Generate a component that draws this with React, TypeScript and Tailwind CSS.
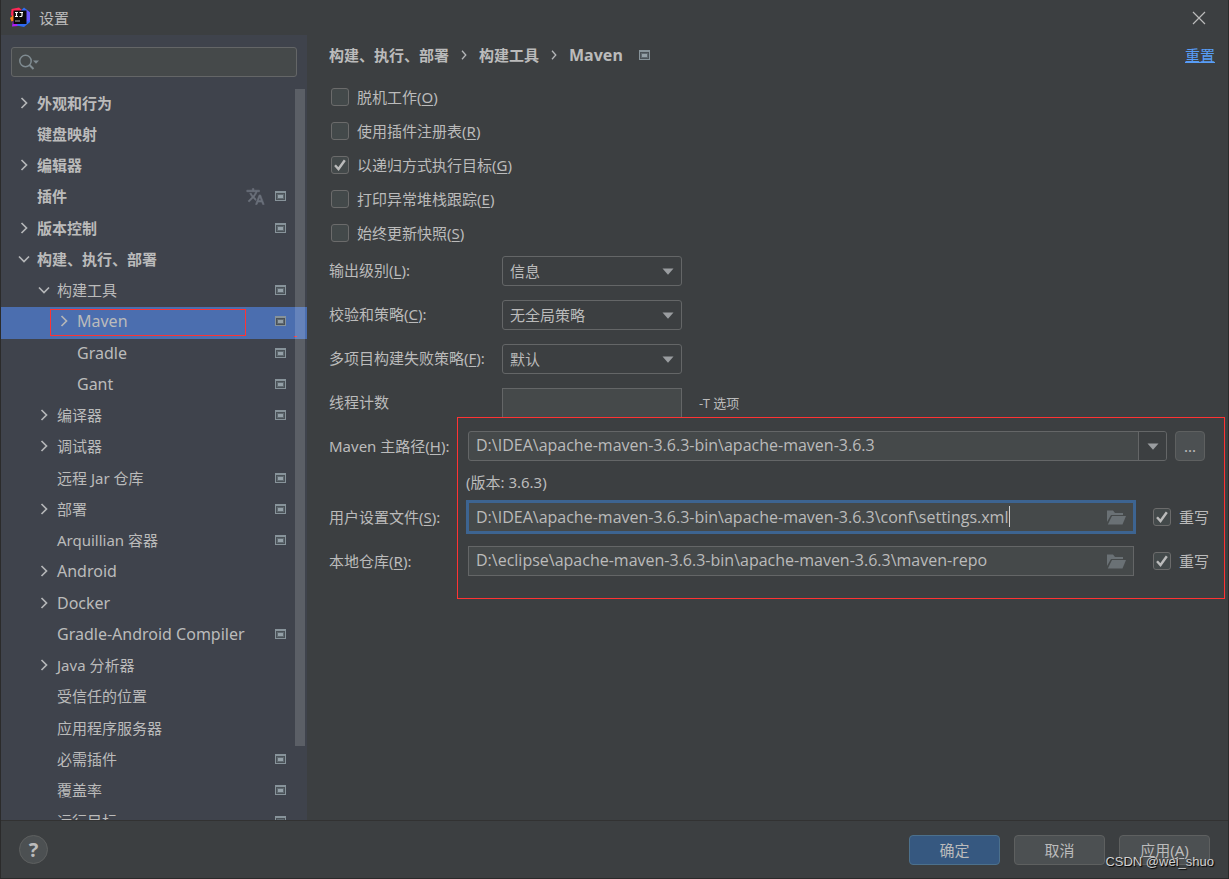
import { useState } from 'react';
import type { ReactNode } from 'react';

type Node = {
    label: string;
    level: 0 | 1 | 2;
    arrow?: 'right' | 'down';
    scoped?: boolean;
    translate?: boolean;
};

const tree: Node[] = [
    { label: '外观和行为', level: 0, arrow: 'right' },
    { label: '键盘映射', level: 0 },
    { label: '编辑器', level: 0, arrow: 'right' },
    { label: '插件', level: 0, scoped: true, translate: true },
    { label: '版本控制', level: 0, arrow: 'right', scoped: true },
    { label: '构建、执行、部署', level: 0, arrow: 'down' },
    { label: '构建工具', level: 1, arrow: 'down', scoped: true },
    { label: 'Maven', level: 2, arrow: 'right', scoped: true },
    { label: 'Gradle', level: 2, scoped: true },
    { label: 'Gant', level: 2, scoped: true },
    { label: '编译器', level: 1, arrow: 'right', scoped: true },
    { label: '调试器', level: 1, arrow: 'right' },
    { label: '远程 Jar 仓库', level: 1, scoped: true },
    { label: '部署', level: 1, arrow: 'right', scoped: true },
    { label: 'Arquillian 容器', level: 1, scoped: true },
    { label: 'Android', level: 1, arrow: 'right' },
    { label: 'Docker', level: 1, arrow: 'right' },
    { label: 'Gradle-Android Compiler', level: 1, scoped: true },
    { label: 'Java 分析器', level: 1, arrow: 'right' },
    { label: '受信任的位置', level: 1 },
    { label: '应用程序服务器', level: 1 },
    { label: '必需插件', level: 1, scoped: true },
    { label: '覆盖率', level: 1, scoped: true },
    { label: '运行目标', level: 1, scoped: true },
];

const indent = ['pl-4 font-bold', 'pl-9', 'pl-14'];

// latin-only names are set one step larger so they sit evenly next to the Chinese ones
const isLatin = (s: string) => /^[\x20-\x7e]+$/.test(s);

const Logo = () => (
    <svg width="21" height="21" viewBox="0 0 21 21" aria-hidden="true">
        <path d="M1.500 2 9 .5 13 4 5 12.500 1 8z" fill="#fe2857" />
        <path d="M0 11 3.500 8 6 13 1.500 14.500z" fill="#fc801d" />
        <path d="M2 19.500 3 14 12 17 8 19z" fill="#af1df5" />
        <path d="M11 3.500 14 .5 20 5.500V15l-6 5-7-1.500z" fill="#2f6bf2" />
        <path d="M16 2.500l4 3V13l-4 2z" fill="#6b57ff" />
        <rect x="3.500" y="3.500" width="13" height="13.500" fill="#0a0a0a" />
        <path d="M5 5.500h3M6.500 5.500v4M5 9.500h3M9.500 5.500h3.500M12 5.500v3q0 1-1 1H9.500" stroke="#fff" strokeWidth="1.200" fill="none" />
        <path d="M5 14h5" stroke="#aaa" strokeWidth="1" />
    </svg>
);

const Chevron = ({ dir }: { dir: 'right' | 'down' }) => (
    <svg width="14" height="14" viewBox="0 0 14 14" fill="none" stroke="#b4b6b8" strokeWidth="1.700" aria-hidden="true">
        <path d={dir === 'right' ? 'M4.500 2 9.500 7 4.500 12' : 'M2 4.500 7 9.500 12 4.500'} />
    </svg>
);

const Crumb = () => (
    <svg width="6" height="10" viewBox="0 0 6 10" fill="none" stroke="#b4b6b8" strokeWidth="1.300" className="mx-3 shrink-0" aria-hidden="true">
        <path d="M1 .8 4.800 5 1 9.200" />
    </svg>
);

const TranslateIcon = () => (
    <svg width="19" height="19" viewBox="0 0 24 24" fill="#6b717b" stroke="#6b717b" strokeWidth=".7" className="mr-2.5 shrink-0" aria-hidden="true">
        <path d="M12.870 15.070l-2.540-2.510.03-.03A17.500 17.500 0 0 0 14.070 6H17V4h-7V2H8v2H1v2h11.170A15.700 15.700 0 0 1 9 11.350 15.600 15.600 0 0 1 6.690 8h-2a17.600 17.600 0 0 0 2.980 4.560l-5.090 5.020L4 19l5-5 3.110 3.110z" />
        <path d="M18.500 10h-2L12 22h2l1.120-3h4.750L21 22h2zm-2.620 7 1.620-4.330L19.120 17z" />
    </svg>
);

const ScopeIcon = () => (
    <svg width="11" height="10" viewBox="0 0 11 10" aria-hidden="true">
        <rect width="11" height="10" fill="#87939a" />
        <rect x="1" y="2" width="9" height="7" fill="#4a5157" />
        <rect x="2" y="3" width="7" height="5" fill="#5f6970" />
        <rect x="3" y="4" width="5" height="3" fill="#94a0a7" />
    </svg>
);

const Triangle = () => (
    <svg width="12" height="7" viewBox="0 0 12 7" aria-hidden="true">
        <path d="M.5.5h11L6 6.800z" fill="#9a9da0" />
    </svg>
);

const Folder = () => (
    <svg width="19" height="15" viewBox="0 0 19 15" fill="#6a7175" aria-hidden="true">
        <path d="M0 .5h6l2 2.500h8V5H4L0 12z" />
        <path d="M5 6h14l-3.500 8.500H.8z" />
    </svg>
);

const Key = ({ k, colon }: { k: string; colon?: boolean }) => (
    <>(<span className="underline underline-offset-2">{k}</span>){colon && ':'}</>
);

const CheckBox = ({ on, children }: { on?: boolean; children: ReactNode }) => {
    const [checked, setChecked] = useState(!!on);
    return (
        <label className="flex items-center gap-2 whitespace-nowrap">
            <span className="relative flex size-[18px] shrink-0">
                <input
                    type="checkbox"
                    checked={checked}
                    onChange={() => setChecked(!checked)}
                    className="size-full appearance-none rounded-[3px] border border-[#6b6b6b] bg-[#43494a]"
                />
                {checked && (
                    <svg viewBox="0 0 18 18" className="pointer-events-none absolute inset-0" fill="none" stroke="#bbb" strokeWidth="2.400">
                        <path d="M4 9.200 7.500 13 13.800 4.200" />
                    </svg>
                )}
            </span>
            <span>{children}</span>
        </label>
    );
};

const SelectRow = ({ id, label, k, value }: { id: string; label: string; k: string; value: string }) => (
    <div className="flex h-[30px] items-center">
        <label htmlFor={id} className="w-[173px] shrink-0 pb-0.5">{label}<Key k={k} colon /></label>
        <div className="relative w-[180px]">
            <select id={id} className="h-[30px] w-full appearance-none rounded-[3px] border border-[#646667] bg-[#3c3f41] px-[7px] outline-none">
                <option>{value}</option>
            </select>
            <span className="pointer-events-none absolute inset-y-0 right-2 flex items-center"><Triangle /></span>
        </div>
    </div>
);

const Sidebar = () => (
    <aside className="flex w-[306px] shrink-0 flex-col bg-[#3f434c] pt-3">
        <div className="relative mx-[10px]">
            <input aria-label="搜索" className="h-[30px] w-full rounded-[3px] border border-[#646667] bg-[#45494a] pl-8 outline-none" />
            <svg width="22" height="16" viewBox="0 0 22 16" className="pointer-events-none absolute left-2 top-[7px]" fill="none" stroke="#7f8b91" strokeWidth="1.500" aria-hidden="true">
                <circle cx="6.500" cy="7" r="5.700" />
                <path d="m10.500 11 4 4" strokeWidth="2" />
                <path d="M14 6.500h6L17 9.800z" fill="#7f8b91" stroke="none" />
            </svg>
        </div>
        <nav className="relative mt-3 min-h-0 flex-1 overflow-hidden">
            <ul>
                {tree.map((n) => (
                    <li key={n.label} className="relative h-[31px] nth-[4n]:h-8">
                        <button className={`flex h-full w-full items-center pb-1 pr-[21px] text-left ${indent[n.level]} ${n.label === 'Maven' ? 'bg-[#4b6eaf]' : ''}`}>
                            <span className="w-5 shrink-0">{n.arrow && <Chevron dir={n.arrow} />}</span>
                            <span className={`flex-1 whitespace-nowrap ${isLatin(n.label) ? 'text-base' : ''}`}>{n.label}</span>
                            {n.translate && <TranslateIcon />}
                            {n.scoped && <ScopeIcon />}
                        </button>
                        {n.label === 'Maven' && (
                            <>
                                <div className="pointer-events-none absolute bottom-[3px] left-[49px] right-[61px] top-[2px] border border-[#ff3333]" />
                                <div className="absolute bottom-[2px] right-[10px] h-px w-[3px] bg-[#ff3333]" />
                            </>
                        )}
                    </li>
                ))}
            </ul>
            <div className="absolute bottom-[74px] right-[2px] top-0 w-[10px] bg-white/15" />
        </nav>
    </aside>
);

const PathRow = ({ id, label, k, value, focused }: { id: string; label: string; k: string; value: string; focused?: boolean }) => (
    <div className="flex h-[30px] items-center">
        <label htmlFor={id} className="w-[139px] shrink-0">{label}<Key k={k} colon /></label>
        <div className="relative mr-[19px] flex-1">
            <input
                id={id}
                defaultValue={value}
                className={`block h-[30px] w-full border bg-[#45494a] pl-[7px] pr-9 font-['Open_Sans',sans-serif] text-base outline-none ${focused ? 'border-[#3d6491] ring-2 ring-[#3d6491]' : 'border-[#646667] pb-0.5'}`}
            />
            {focused && <span className="absolute left-[541px] top-[4px] h-[21px] w-px bg-[#d0d0d0]" />}
            <button aria-label="浏览" className="absolute inset-y-0 right-2 flex items-center"><Folder /></button>
        </div>
        <CheckBox on>重写</CheckBox>
    </div>
);

const MavenPage = () => (
    <main className="min-w-0 flex-1 pl-[22px] pr-[19px]">
        <div className="-mr-[6px] flex h-10 items-center font-bold">
            <span>构建、执行、部署</span>
            <Crumb />
            <span>构建工具</span>
            <Crumb />
            <span className="mr-4 text-base/5">Maven</span>
            <ScopeIcon />
            <a href="#" className="ml-auto font-normal text-[#589df6] underline">重置</a>
        </div>

        <div className="ml-[2px] mt-[5px] *:h-[34px]">
            <CheckBox>脱机工作<Key k="O" /></CheckBox>
            <CheckBox>使用插件注册表<Key k="R" /></CheckBox>
            <CheckBox on>以递归方式执行目标<Key k="G" /></CheckBox>
            <CheckBox>打印异常堆栈跟踪<Key k="E" /></CheckBox>
            <CheckBox>始终更新快照<Key k="S" /></CheckBox>
        </div>

        <div className="mt-[6px] flex flex-col gap-[14px]">
            <SelectRow id="level" label="输出级别" k="L" value="信息" />
            <SelectRow id="checksum" label="校验和策略" k="C" value="无全局策略" />
            <SelectRow id="fail" label="多项目构建失败策略" k="F" value="默认" />
            <div className="flex h-[30px] items-center">
                <label htmlFor="threads" className="w-[173px] pb-0.5">线程计数</label>
                <input id="threads" className="h-[30px] w-[180px] border border-[#646667] bg-[#45494a] px-[7px] outline-none" />
                <span className="ml-[17px] text-[13px]">-T 选项</span>
            </div>
        </div>

        <div className="relative mt-[13px]">
            <div className="flex h-[30px] items-center pr-1">
                <label htmlFor="home" className="w-[139px] shrink-0 whitespace-nowrap">Maven 主路径<Key k="H" colon /></label>
                <div className="flex h-[30px] flex-1 overflow-hidden rounded-[3px] border border-[#646667] bg-[#45494a]">
                    <input id="home" defaultValue="D:\IDEA\apache-maven-3.6.3-bin\apache-maven-3.6.3" className="min-w-0 flex-1 px-[7px] pb-0.5 font-['Open_Sans',sans-serif] text-base outline-none" />
                    <button aria-label="展开" className="flex w-7 items-center justify-center border-l border-[#646667] bg-[#3c3f41]"><Triangle /></button>
                </div>
                <button className="ml-2 size-[30px] rounded-[4px] border border-[#5e6060] bg-[#4c5052]">...</button>
            </div>
            <div className="flex h-[41px] items-center pl-[137px]">(版本: 3.6.3)</div>
            <div className="flex flex-col gap-[14px]">
                <PathRow id="settings" label="用户设置文件" k="S" value="D:\IDEA\apache-maven-3.6.3-bin\apache-maven-3.6.3\conf\settings.xml" focused />
                <PathRow id="repo" label="本地仓库" k="R" value="D:\eclipse\apache-maven-3.6.3-bin\apache-maven-3.6.3\maven-repo" />
            </div>
            <div className="pointer-events-none absolute -bottom-[23px] -right-4 -top-[14px] left-[128px] border border-[#ff3333]" />
        </div>
    </main>
);

const Footer = () => (
    <footer className="relative flex h-[58px] shrink-0 items-center gap-[14px] border-t border-[#323232] px-[18px]">
        <button aria-label="帮助" className="mr-auto size-[29px] rounded-full border border-[#5e6060] bg-[#4c5052] text-xl/none font-bold">?</button>
        <button className="h-[30px] w-[91px] rounded-[4px] border border-[#4c708c] bg-[#365880]">确定</button>
        <button className="h-[30px] w-[91px] rounded-[4px] border border-[#5e6060] bg-[#4c5052]">取消</button>
        <button className="h-[30px] w-[91px] rounded-[4px] border border-[#5e6060] bg-[#4c5052]">应用<Key k="A" /></button>
        <span className="pointer-events-none absolute bottom-[6px] right-[14px] font-['Liberation_Sans'] text-[13px] text-[#d0d0d0] text-shadow-[1px_1px_1px_#000]">CSDN @wei_shuo</span>
    </footer>
);

const App = () => (
    <div className="flex h-screen flex-col border-x border-b border-[#2b2b2b] bg-[#3c3f41] font-['Noto_Sans','Noto_Sans_CJK_SC',sans-serif] text-[15px]/5 text-[#bbbbbb]">
        <header className="flex h-[35px] shrink-0 items-center pl-[9px] pr-[22px]">
            <Logo />
            <h1 className="ml-2">设置</h1>
            <button aria-label="关闭" className="ml-auto">
                <svg width="14" height="14" viewBox="0 0 14 14" stroke="#bbb" strokeWidth="1.200" aria-hidden="true">
                    <path d="M1 1l12 12M13 1 1 13" />
                </svg>
            </button>
        </header>
        <div className="flex min-h-0 flex-1">
            <Sidebar />
            <MavenPage />
        </div>
        <Footer />
    </div>
);

export default App;
